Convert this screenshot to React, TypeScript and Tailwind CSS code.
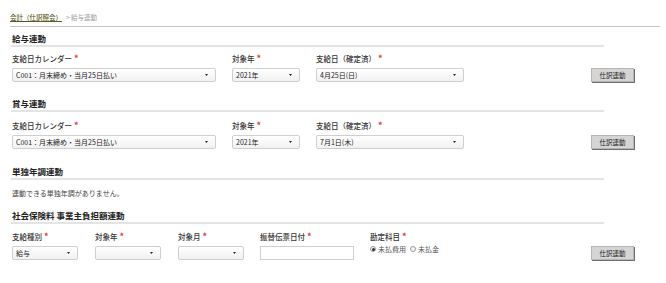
import React from "react";

const Req = () => (
  <span className="text-[#e0352b] ml-[2px] text-[9px] font-bold leading-[10px] align-top">*</span>
);

const Arrow = () => (
  <svg width="3" height="2" viewBox="0 0 3 2" className="shrink-0">
    <path d="M0 0 L3 0 L1.5 2 Z" fill="#222" />
  </svg>
);

function Select({ w, text }: { w: string; text?: string }) {
  return (
    <div
      className={`${w} h-[14px] border border-[#cfcfcf] rounded-[2px] bg-gradient-to-b from-white to-[#f1f1f1] flex items-center justify-between pl-[3px] pr-[7px] text-[7px] leading-[10px] text-[#222]`}
    >
      <span>{text ?? ""}</span>
      <Arrow />
    </div>
  );
}

function Field({ label, children }: { label: string; children: React.ReactNode }) {
  return (
    <div className="flex flex-col">
      <div className="h-[10px] leading-[10px] text-[7.5px] font-medium text-[#333] mb-[4px] whitespace-nowrap">
        {label}
        <Req />
      </div>
      {children}
    </div>
  );
}

function Btn() {
  return (
    <div className="ml-auto mt-[14px] w-[43px] h-[14px] bg-[#d5d5d5] border border-[#b5b5b5] shadow-[1px_1px_0_#6f6f6f] flex items-center justify-center text-[6.5px] leading-[10px] text-[#222]">
      仕訳連動
    </div>
  );
}

function Heading({ children, cls }: { children: React.ReactNode; cls: string }) {
  return (
    <div
      className={`${cls} w-[593px] border-b-2 border-[#e4e4e4] pb-[2px] text-[8.5px] font-bold leading-[10px] text-[#222] pl-[1px]`}
    >
      {children}
    </div>
  );
}

function Radio({ checked, label }: { checked?: boolean; label: string }) {
  return (
    <div className="flex items-center mr-[4px]">
      <span className="w-[6px] h-[6px] rounded-full border border-[#9a9a9a] bg-[#f4f4f4] flex items-center justify-center mr-[2px]">
        {checked && <span className="w-[3px] h-[3px] rounded-full bg-[#333]" />}
      </span>
      <span className="text-[7px] leading-[10px] text-[#555]">{label}</span>
    </div>
  );
}

export default function App() {
  return (
    <div className="w-[666px] h-[283px] bg-white pl-[10px] font-['Noto_Sans_CJK_JP',sans-serif] text-[#333] overflow-hidden">
      <div className="w-[650px] h-[27px] pt-[12px] border-b border-[#c4c4c4] text-[6.5px] leading-[10px] flex">
        <span className="text-[#5b5a22] underline font-medium">会計（仕訳照会）</span>
        <span className="text-[#9a9a9a] ml-[4px]">&gt; 給与連動</span>
      </div>

      <div className="pl-[1px]">
        <Heading cls="mt-[6px]">給与連動</Heading>
        <div className="mt-[7px] w-[623px] flex items-start gap-[16px] pl-[1px]">
          <Field label="支給日カレンダー">
            <Select w="w-[204px]" text="C001：月末締め・当月25日払い" />
          </Field>
          <Field label="対象年">
            <Select w="w-[68px]" text="2021年" />
          </Field>
          <Field label="支給日（確定済）">
            <Select w="w-[148px]" text="4月25日(日)" />
          </Field>
          <Btn />
        </div>

        <Heading cls="mt-[16px]">賞与連動</Heading>
        <div className="mt-[9px] w-[623px] flex items-start gap-[16px] pl-[1px]">
          <Field label="支給日カレンダー">
            <Select w="w-[204px]" text="C001：月末締め・当月25日払い" />
          </Field>
          <Field label="対象年">
            <Select w="w-[68px]" text="2021年" />
          </Field>
          <Field label="支給日（確定済）">
            <Select w="w-[148px]" text="7月1日(木)" />
          </Field>
          <Btn />
        </div>

        <Heading cls="mt-[17px]">単独年調連動</Heading>
        <div className="mt-[8px] pl-[1px] text-[7px] leading-[10px] text-[#444]">
          連動できる単独年調がありません。
        </div>

        <Heading cls="mt-[12px]">社会保険料 事業主負担額連動</Heading>
        <div className="mt-[8px] w-[623px] flex items-start pl-[1px]">
          <Field label="支給種別">
            <Select w="w-[66px]" text="給与" />
          </Field>
          <div className="ml-[17px]">
            <Field label="対象年">
              <Select w="w-[66px]" />
            </Field>
          </div>
          <div className="ml-[17px]">
            <Field label="対象月">
              <Select w="w-[66px]" />
            </Field>
          </div>
          <div className="ml-[16px]">
            <Field label="振替伝票日付">
              <div className="w-[94px] h-[14px] border border-[#cfcfcf] bg-white" />
            </Field>
          </div>
          <div className="ml-[16px] flex flex-col">
            <div className="h-[10px] leading-[10px] text-[7.5px] font-medium text-[#333] mb-[2px]">
              勘定科目
              <Req />
            </div>
            <div className="flex items-center">
              <Radio checked label="未払費用" />
              <Radio label="未払金" />
            </div>
          </div>
          <Btn />
        </div>
      </div>
    </div>
  );
}
